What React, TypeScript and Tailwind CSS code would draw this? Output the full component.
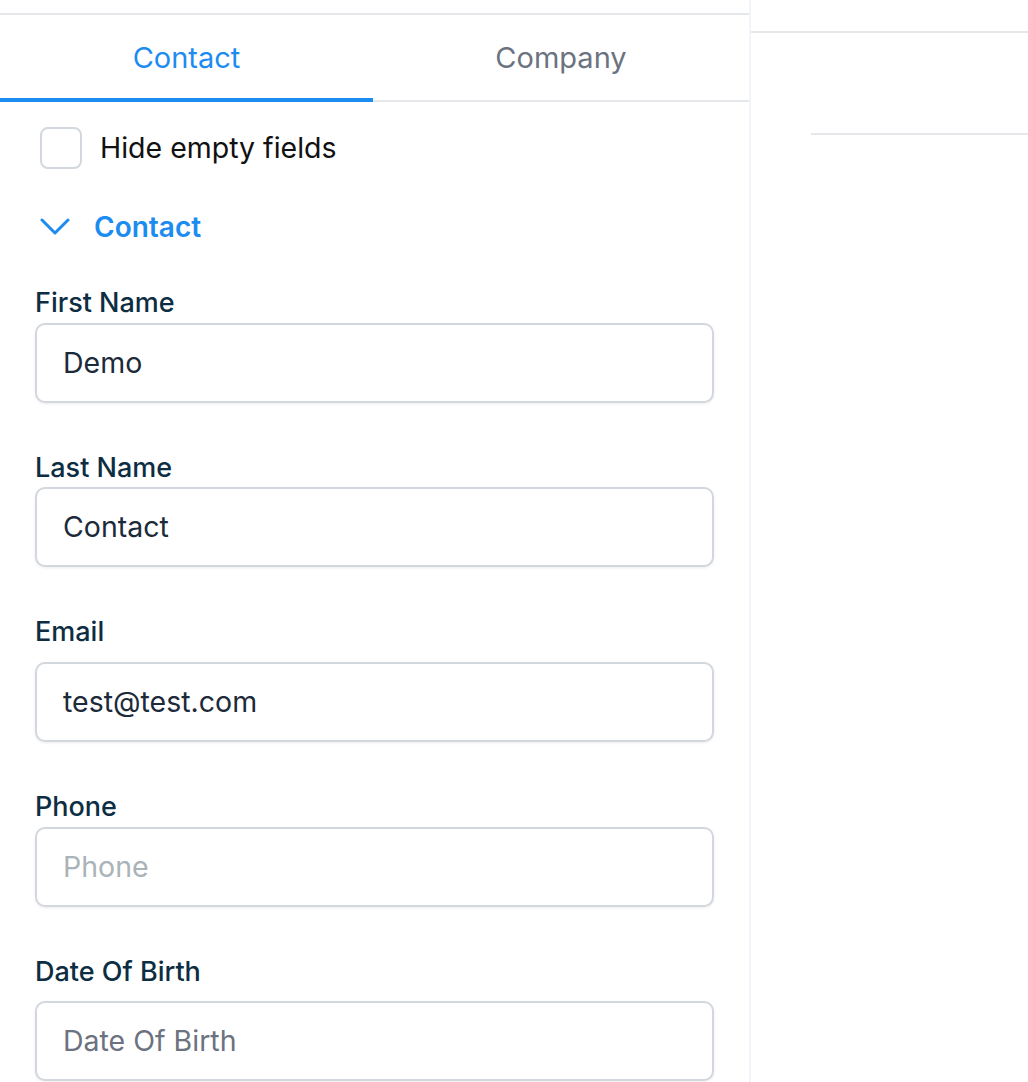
const fields = [
  { label: "First Name", value: "Demo", gap: "mt-[4px]", top: "" },
  { label: "Last Name", value: "Contact", gap: "mt-[3px]", top: "mt-[49px]" },
  { label: "Email", value: "test@test.com", gap: "mt-[14px]", top: "mt-[49px]" },
  { label: "Phone", placeholder: "Phone", light: true, gap: "mt-[4px]", top: "mt-[49px]" },
  { label: "Date Of Birth", placeholder: "Date Of Birth", gap: "mt-[13px]", top: "mt-[49px]" },
]

function Field({ label, value, placeholder, light, gap, top }: { label: string; value?: string; placeholder?: string; light?: boolean; gap: string; top: string }) {
  return (
    <div className={`flex flex-col ${top}`}>
      <label className="text-[27px] leading-[32px] font-medium text-[#0d2d42]">{label}</label>
      <div className={`${gap} h-[80px] rounded-[10px] border-2 border-[#d3d8de] bg-white shadow-[0_1px_3px_rgba(0,0,0,0.08)] flex items-center px-[26px] pt-[2px]`}>
        {value ? (
          <span className="text-[28.5px] text-[#1c2a3a]">{value}</span>
        ) : (
          <span className={`text-[28.5px] ${light ? "text-[#a9b3b8]" : "text-[#6b7280]"}`}>{placeholder}</span>
        )}
      </div>
    </div>
  )
}

export default function App() {
  return (
    <div className="flex h-[1082px] w-full overflow-hidden bg-white font-['Inter',sans-serif]">
      <div className="w-[751px] shrink-0 border-r-2 border-[#f1f5f9] pt-[13px]">
        <div className="border-t-2 border-[#e5e7eb]" />
        <div className="flex border-b-2 border-[#e5e7eb]">
          <button className="w-[373px] h-[87px] -mb-[2px] border-b-4 border-[#1c8cf0] text-[29px] text-[#1c8cf0] flex items-center justify-center pt-[2px]">
            Contact
          </button>
          <button className="flex-1 h-[87px] -mb-[2px] border-b-4 border-transparent text-[29px] text-[#6b7280] flex items-center justify-center pt-[2px]">
            Company
          </button>
        </div>
        <div className="px-[35px]">
          <div className="mt-[25px] ml-[5px] flex items-center gap-[18px]">
            <div className="w-[42px] h-[42px] rounded-[8px] border-2 border-[#d3d8de]" />
            <span className="text-[28.5px] text-[#111111]">Hide empty fields</span>
          </div>
          <div className="mt-[36px] ml-[5px] flex items-center gap-[24px]">
            <svg viewBox="0 0 30 18" className="w-[30px] h-[18px]" fill="none" stroke="#1c8cf0" strokeWidth={3} strokeLinecap="round" strokeLinejoin="round">
              <polyline points="2,2 15,15 28,2" />
            </svg>
            <span className="text-[28px] font-semibold text-[#1c8cf0]">Contact</span>
          </div>
          <div className="mt-[39px] flex flex-col">
            {fields.map((f) => (
              <Field key={f.label} {...f} />
            ))}
          </div>
        </div>
      </div>
      <div className="flex-1 pt-[31px]">
        <div className="border-t-2 border-[#e5e7eb]" />
        <div className="ml-[60px] mt-[100px] border-t-2 border-[#e5e7eb]" />
      </div>
    </div>
  )
}
